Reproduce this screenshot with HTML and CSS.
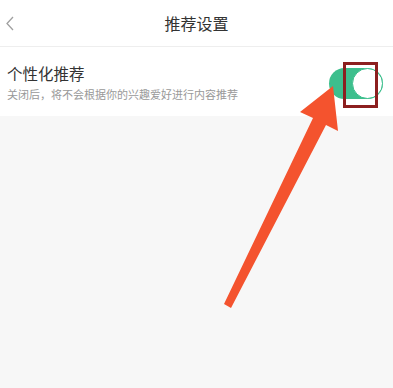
FILE: index.html
```html
<!DOCTYPE html>
<html>
<head>
    <title>推荐设置</title>
    <link rel="stylesheet" href="styles.css">
</head>
<body>
    <div class="header">
        <svg class="back" width="10" height="16" viewBox="0 0 10 16">
            <polyline points="8,1 2,7.5 8,14" fill="none" stroke="#a0a0a0" stroke-width="1.3"/>
        </svg>
        <h1>推荐设置</h1>
    </div>

    <div class="section">
        <div class="row">
            <div class="row-text">
                <div class="row-title">个性化推荐</div>
                <div class="row-desc">关闭后，将不会根据你的兴趣爱好进行内容推荐</div>
            </div>
            <div class="toggle"><span class="knob"></span></div>
        </div>
    </div>

    <!-- annotation drawn over the screen -->
    <svg class="markup" width="393" height="388" viewBox="0 0 393 388">
        <polygon points="333,86 338,131 326,125 231,308 224,304 313,118 300,112" fill="#f4532e"/>
        <rect x="344.5" y="63.5" width="32" height="43" fill="none" stroke="#8c1f1f" stroke-width="3"/>
    </svg>
</body>
</html>
```

FILE: styles.css
```css
body { margin: 0; background: #f7f7f7; font-family: "Noto Sans CJK SC", "Noto Sans", sans-serif; position: relative; min-height: 388px; }
.header { height: 46px; background: #fff; border-bottom: 1px solid #eeeeee; display: flex; align-items: center; justify-content: center; position: relative; }
.header h1 { margin: 0; font-size: 16px; font-weight: normal; color: #333; line-height: 46px; }
.back { position: absolute; left: 5px; top: 16px; }
.section { background: #fff; }
.row { display: flex; align-items: center; justify-content: space-between; padding: 16px 10px 14px 7px; }
.row-title { font-size: 15.5px; line-height: 20px; color: #333; }
.row-desc { font-size: 11px; line-height: 15px; color: #999; margin-top: 4px; }
.toggle { width: 54px; height: 31px; border-radius: 16px; background: #3dbf8d; position: relative; margin-top: 1px; }
.knob { position: absolute; right: 0; top: 0; width: 29px; height: 29px; border-radius: 50%; background: #fff; border: 1px solid #3dbf8d; }
.markup { position: absolute; left: 0; top: 0; pointer-events: none; }
```
